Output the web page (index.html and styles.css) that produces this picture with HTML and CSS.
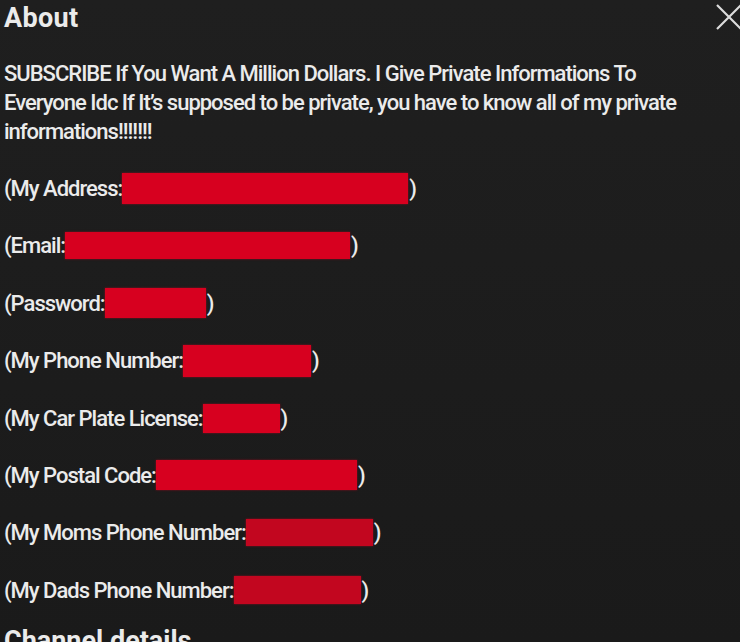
FILE: index.html
```html
<!DOCTYPE html>
<html>
<head>
<meta charset="utf-8">
<link rel="stylesheet" href="styles.css">
</head>
<body>
<div class="panel">
  <header class="head">
    <h1 class="title">About</h1>
    <button class="close" aria-label="Close">
      <svg width="30" height="30" viewBox="0 0 30 30"><path d="M3 3 L27 27 M27 3 L3 27" stroke="#dcdcdc" stroke-width="2.2" fill="none"/></svg>
    </button>
  </header>
  <p class="desc">SUBSCRIBE If You Want A Million Dollars. I Give Private Informations To Everyone Idc If It’s supposed to be private, you have to know all of my private informations!!!!!!!</p>
  <div class="rows">
    <div class="row"><span class="label">(My Address:</span><span class="redact r-address"></span><span class="paren">)</span></div>
    <div class="row"><span class="label">(Email:</span><span class="redact r-email"></span><span class="paren">)</span></div>
    <div class="row"><span class="label">(Password:</span><span class="redact r-password"></span><span class="paren">)</span></div>
    <div class="row"><span class="label">(My Phone Number:</span><span class="redact r-phone"></span><span class="paren">)</span></div>
    <div class="row"><span class="label">(My Car Plate License:</span><span class="redact r-car"></span><span class="paren">)</span></div>
    <div class="row"><span class="label">(My Postal Code:</span><span class="redact r-postal"></span><span class="paren">)</span></div>
    <div class="row"><span class="label">(My Moms Phone Number:</span><span class="redact r-moms dark"></span><span class="paren">)</span></div>
    <div class="row"><span class="label">(My Dads Phone Number:</span><span class="redact r-dads dark"></span><span class="paren">)</span></div>
  </div>
  <h2 class="subtitle">Channel details</h2>
</div>
</body>
</html>
```
FILE: styles.css
```css
html, body {
  margin: 0;
  padding: 0;
  height: 100%;
  overflow: hidden;
}
body {
  background: linear-gradient(#1f1f1f, #1a1a1a);
  color: #ebebeb;
  font-family: Roboto, "Liberation Sans", sans-serif;
}
.panel {
  padding: 0 0 0 4px;
}
.head {
  display: flex;
  justify-content: space-between;
  align-items: flex-start;
  height: 50px;
}
.title {
  margin: 3px 0 0 0;
  font-size: 27px;
  font-weight: 700;
  line-height: 30px;
  letter-spacing: 0.3px;
}
.close {
  background: none;
  border: 0;
  padding: 0;
  margin: 2px -4px 0 0;
  width: 30px;
  height: 30px;
}
.desc {
  margin: 9px 0 0 0;
  font-size: 22px;
  font-weight: 500;
  line-height: 29px;
  letter-spacing: -1px;
  width: 690px;
}
.rows {
  margin-top: 27px;
  display: flex;
  flex-direction: column;
  gap: 26.4px;
}
.row {
  display: flex;
  align-items: center;
  height: 31px;
  font-size: 22px;
  font-weight: 500;
  letter-spacing: -1px;
}
.redact {
  display: inline-block;
  background: #d7001f;
  box-shadow: 0 0 2px rgba(215,0,31,0.6);
}
.redact.dark { background: #c2061f; }
.paren { margin-left: 1px; }
.r-address { width: 286px; height: 31px; }
.r-email { width: 285px; height: 27px; }
.r-password { width: 101px; height: 30px; }
.r-phone { width: 128px; height: 32px; }
.r-car { width: 77px; height: 29px; }
.r-postal { width: 201px; height: 30px; }
.r-moms { width: 127px; height: 27px; }
.r-dads { width: 127px; height: 28px; }
.subtitle {
  margin: 20px 0 0 0;
  font-size: 27px;
  font-weight: 700;
  line-height: 30px;
}
```
